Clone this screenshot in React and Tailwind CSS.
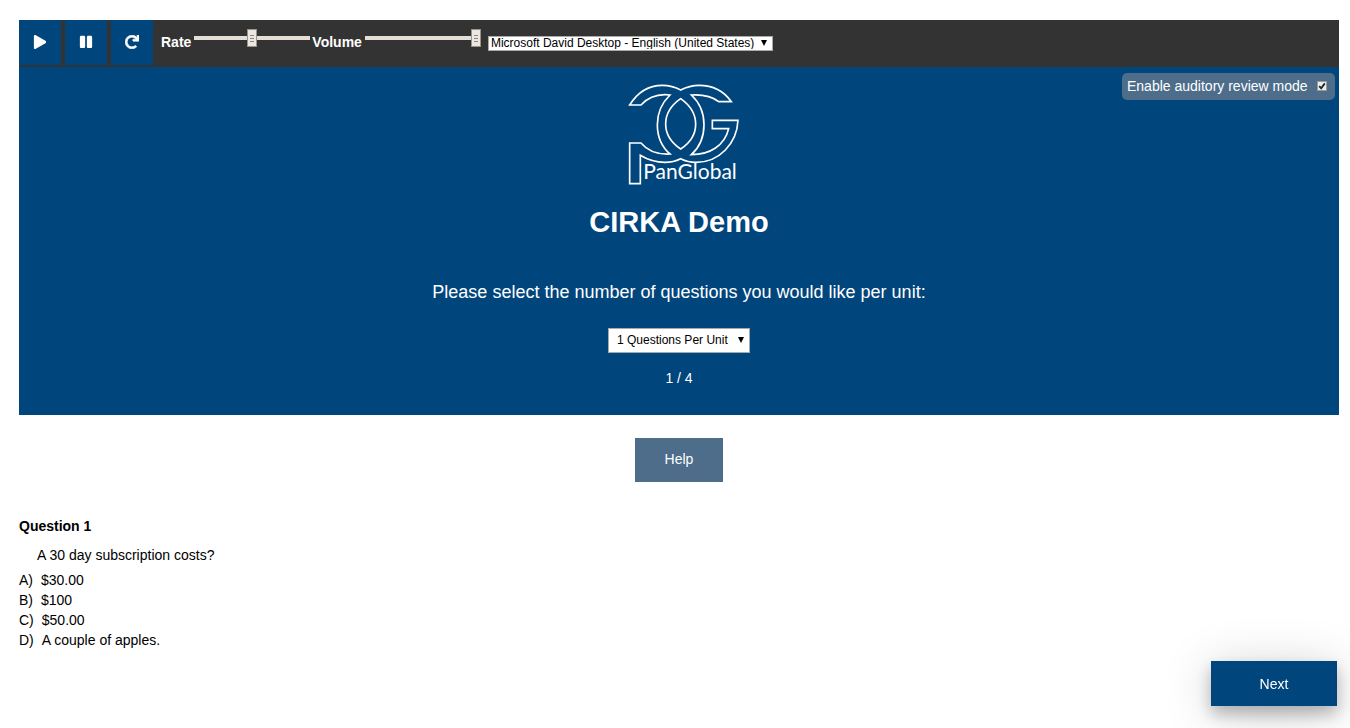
import { useState } from "react";
import { FaPause, FaPlay, FaRedo } from "react-icons/fa";

const choices = [
  ["A)", "$30.00"],
  ["B)", "$100"],
  ["C)", "$50.00"],
  ["D)", "A couple of apples."],
];

function PlayerButton({ label, children }) {
  return (
    <button
      type="button"
      aria-label={label}
      className="flex h-[45px] w-[42px] items-center justify-center bg-[#00457c] pb-0.5 text-sm text-white"
    >
      {children}
    </button>
  );
}

function Slider({ id, label, initial }) {
  const [value, setValue] = useState(initial);
  return (
    <div className="flex items-start gap-[3px]">
      <label htmlFor={id} className="mt-3 text-sm leading-5 font-bold text-white">
        {label}
      </label>
      <input
        id={id}
        type="range"
        min="0"
        max="100"
        value={value}
        onChange={(e) => setValue(e.target.value)}
        className="mt-4 h-1 w-[116px] appearance-none bg-[#e3dfd6] [&::-webkit-slider-thumb]:h-[18px] [&::-webkit-slider-thumb]:w-2.5 [&::-webkit-slider-thumb]:appearance-none [&::-webkit-slider-thumb]:border [&::-webkit-slider-thumb]:border-[#9c938b] [&::-webkit-slider-thumb]:bg-[#ece7e3] [&::-webkit-slider-thumb]:bg-[repeating-linear-gradient(#8f8781_0px_1px,#ece7e3_1px_3px)] [&::-webkit-slider-thumb]:bg-[length:4px_7px] [&::-webkit-slider-thumb]:bg-center [&::-webkit-slider-thumb]:bg-no-repeat"
      />
    </div>
  );
}

function Arrow({ className }) {
  return (
    <svg viewBox="0 0 6 6" className={`pointer-events-none absolute size-1.5 ${className}`} aria-hidden="true">
      <path d="M0 0h6L3 6z" fill="#000" />
    </svg>
  );
}

function Logo() {
  return (
    <svg
      viewBox="10 24 366 306"
      className="h-[102px] w-[122px]"
      fill="none"
      stroke="#fff"
      strokeWidth="5"
      strokeLinejoin="miter"
      role="img"
      aria-label="PanGlobal"
    >
      <path d="M45 90C68 53 100 31 143 31C164 31 182 36 198 45C215 36 232 31 253 31C294 31 327 47 350 80H312C292 64 266 58 230 60C256 84 268 112 268 149C268 187 254 217 230 239C286 239 330 212 342 161H293V136H370C367 205 314 262 244 262C226 262 212 258 198 251C184 258 168 262 151 262C123 262 98 254 77 241V326H45V204H79C98 227 128 239 166 237C141 215 128 187 128 149C128 112 141 84 166 60C132 56 101 66 79 90Z" />
      <path d="M198 71C169 91 153 118 153 147C153 178 171 204 198 222C226 204 243 178 243 147C243 116 226 91 198 71Z" />
      <text x="86" y="313" fontFamily="Lato, sans-serif" fontSize="63" fill="#fff" stroke="none">
        PanGlobal
      </text>
    </svg>
  );
}

export default function App() {
  const [review, setReview] = useState(true);
  return (
    <div className="pt-5 pr-[11px] pb-5 pl-[19px] font-['Liberation_Sans',Arial,sans-serif] text-sm text-black">
      <header className="flex h-[47px] items-start bg-[#333]">
        <div className="flex gap-1">
          <PlayerButton label="Play">
            <FaPlay />
          </PlayerButton>
          <PlayerButton label="Pause">
            <FaPause />
          </PlayerButton>
          <PlayerButton label="Restart">
            <FaRedo className="stroke-[#fff] stroke-[24]" />
          </PlayerButton>
        </div>
        <div className="ml-2 flex gap-0.5">
          <Slider id="rate" label="Rate" initial={50} />
          <Slider id="volume" label="Volume" initial={100} />
        </div>
        <div className="relative mt-4 ml-[7px]">
          <select
            aria-label="Voice"
            className="block h-[15px] w-[285px] appearance-none border border-[#a9a9a9] bg-white pb-px pl-0.5 text-xs leading-3 text-black"
          >
            <option>Microsoft David Desktop - English (United States)</option>
          </select>
          <Arrow className="top-1 right-1.5" />
        </div>
      </header>

      <section className="relative flex flex-col items-center bg-[#00457c] pt-4 pb-[27px] text-white">
        <label className="absolute top-1.5 right-1 flex h-[27px] w-[213px] items-center justify-between rounded-[5px] bg-[#4d6d8b] pr-2 pb-px pl-[5px] text-sm">
          Enable auditory review mode
          <span className="relative size-2.5">
            <input
              type="checkbox"
              checked={review}
              onChange={(e) => setReview(e.target.checked)}
              className="block size-2.5 appearance-none border border-[#9a9a9a] bg-[#ececec]"
            />
            {review && (
              <svg viewBox="0 0 10 10" className="pointer-events-none absolute inset-0 size-2.5" aria-hidden="true">
                <path d="M2.2 5.2 4.2 7.4 7.8 2.4" fill="none" stroke="#222" strokeWidth="1.8" />
              </svg>
            )}
          </span>
        </label>
        <Logo />
        <h1 className="mt-[17px] text-[29px] leading-10 font-bold">CIRKA Demo</h1>
        <label htmlFor="per-unit" className="mt-[34px] text-lg leading-8">
          Please select the number of questions you would like per unit:
        </label>
        <div className="relative mt-5">
          <select
            id="per-unit"
            className="block h-[25px] w-[142px] appearance-none border border-[#a9a9a9] bg-white pb-0.5 pl-2 text-xs text-black"
          >
            <option>1 Questions Per Unit</option>
            <option>2 Questions Per Unit</option>
          </select>
          <Arrow className="top-[9px] right-1.5" />
        </div>
        <p className="mt-[15px] leading-5">1 / 4</p>
      </section>

      <div className="mt-[23px] flex justify-center">
        <button type="button" className="h-11 w-[88px] bg-[#4d6d8b] pb-0.5 text-sm text-white">
          Help
        </button>
      </div>

      <main className="mt-[34px]">
        <h2 className="text-sm leading-5 font-bold">Question 1</h2>
        <p className="mt-[9px] pl-[18px] leading-5">A 30 day subscription costs?</p>
        <ul className="mt-[5px]">
          {choices.map(([letter, text]) => (
            <li key={letter} className="flex gap-2 leading-5">
              <span>{letter}</span>
              <span>{text}</span>
            </li>
          ))}
        </ul>
      </main>

      <button
        type="button"
        className="fixed right-[13px] bottom-[22px] h-[45px] w-[126px] bg-[#00457c] text-sm text-white shadow-[0_8px_16px_0_rgba(0,0,0,0.25),0_6px_50px_0_rgba(0,0,0,0.19)]"
      >
        Next
      </button>
    </div>
  );
}
